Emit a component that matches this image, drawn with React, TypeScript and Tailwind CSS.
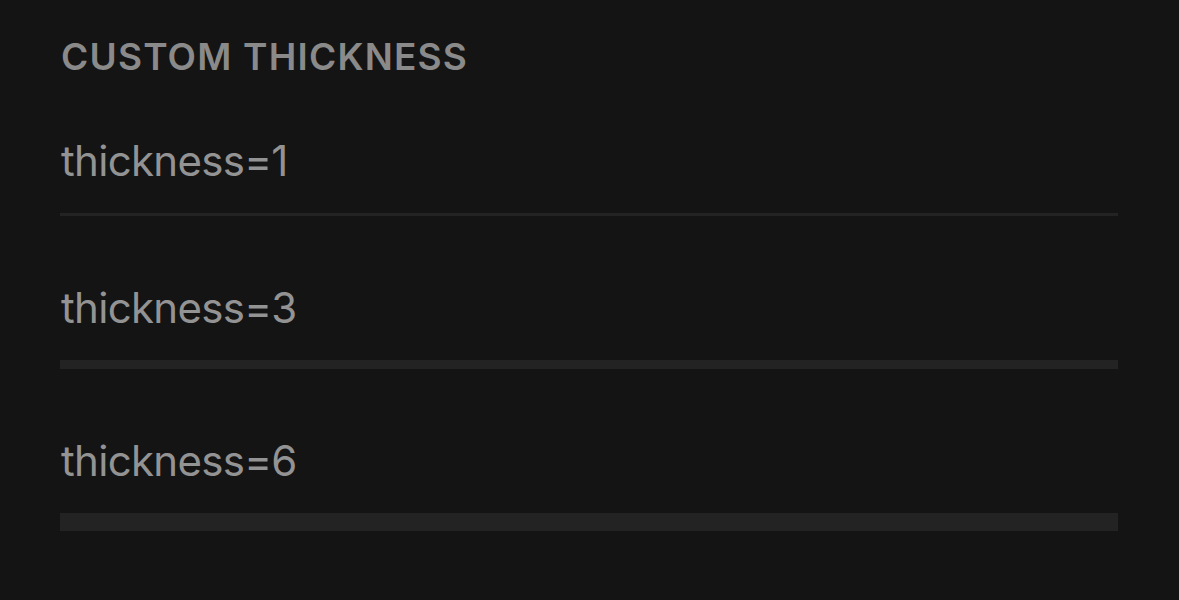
const rows = [
	{ label: "thickness=1", bar: "h-[3px]" },
	{ label: "thickness=3", bar: "h-[9px]" },
	{ label: "thickness=6", bar: "h-[18px]" },
];

export default function App() {
	return (
		<div
			className="min-h-[600px] w-full bg-[#141414] pl-[60px] pr-[61px] pt-[37px]"
			style={{ fontFamily: "Inter, 'Noto Sans', sans-serif" }}>
			<h2 className="h-[40px] text-[37px] leading-[40px] font-semibold tracking-[1.2px] text-[#8a8a8a] pl-[1px]">
				CUSTOM THICKNESS
			</h2>
			<div className="mt-[57px] flex flex-col">
				{rows.map((row, i) => (
					<div key={row.label} className={i > 0 ? "mt-[65px]" : ""}>
						<div className="h-[54px] text-[42px] leading-[54px] tracking-[-0.7px] text-[#939393] pl-[1px]">
							{row.label}
						</div>
						<div className={`mt-[25px] w-full bg-[#232323] ${row.bar}`} />
					</div>
				))}
			</div>
		</div>
	);
}
